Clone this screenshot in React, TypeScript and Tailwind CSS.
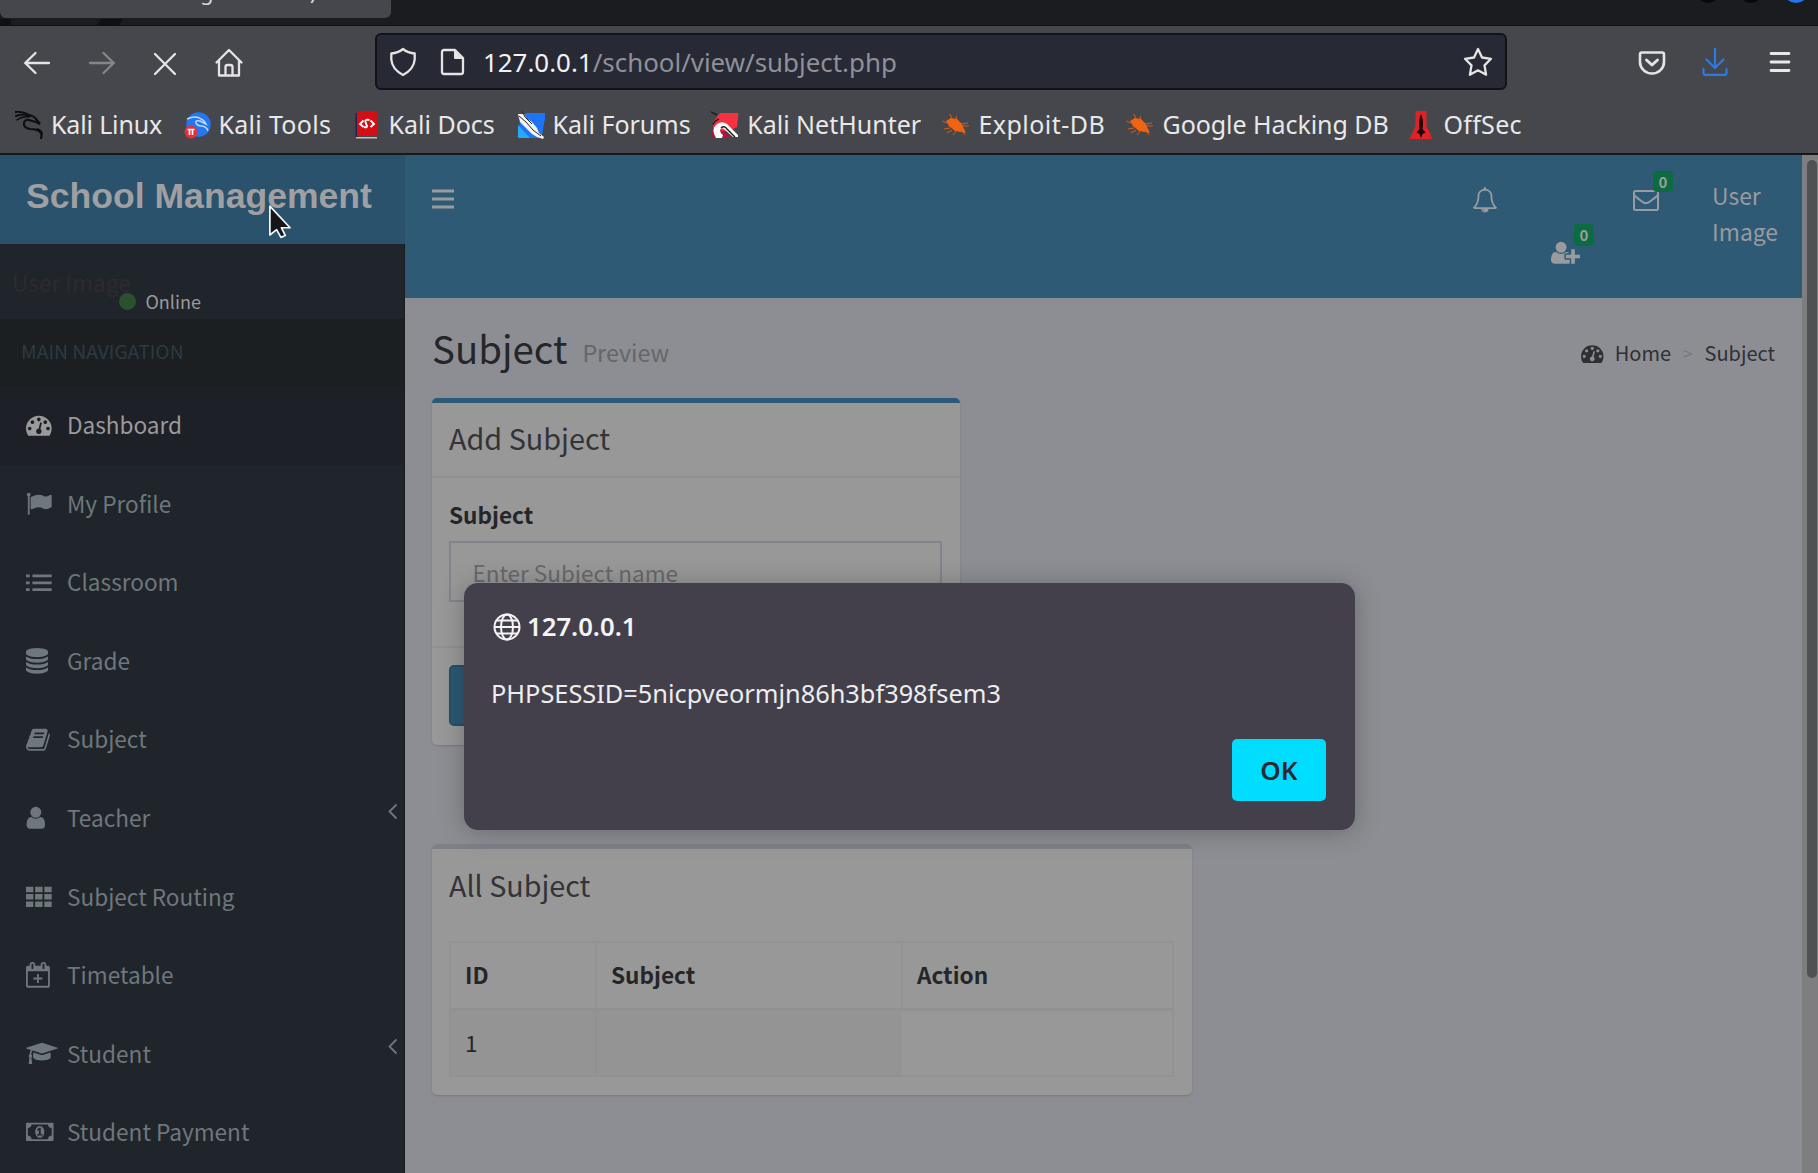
import React from 'react';

const UI = "font-['Noto_Sans',sans-serif]";
const PAGE = "font-['Noto_Sans_CJK_SC','Noto_Sans',sans-serif]";

const paths = {
  dashboard:
    'M384 1152q0-53-37.5-90.5t-90.5-37.5-90.5 37.5-37.5 90.5 37.5 90.5 90.5 37.5 90.5-37.5 37.5-90.5zm192-448q0-53-37.5-90.5t-90.5-37.5-90.5 37.5-37.5 90.5 37.5 90.5 90.5 37.5 90.5-37.5 37.5-90.5zm428 481l101-382q6-26-7.5-48.5t-38.5-29.5-48 6.5-30 39.5l-101 382q-60 5-107 43.5t-63 98.5q-20 77 20 146t117 89 146-20 89-117q16-60-6-117t-72-91zm660-33q0-53-37.5-90.5t-90.5-37.5-90.5 37.5-37.5 90.5 37.5 90.5 90.5 37.5 90.5-37.5 37.5-90.5zm-640-640q0-53-37.5-90.5t-90.5-37.5-90.5 37.5-37.5 90.5 37.5 90.5 90.5 37.5 90.5-37.5 37.5-90.5zm448 192q0-53-37.5-90.5t-90.5-37.5-90.5 37.5-37.5 90.5 37.5 90.5 90.5 37.5 90.5-37.5 37.5-90.5zm320 448q0 261-141 483-19 29-54 29h-1402q-35 0-54-29-141-221-141-483 0-182 71-348t191-286 286-191 348-71 348 71 286 191 191 286 71 348z',
  flag: 'M320 256q0 72-64 110v1266q0 13-9.5 22.5t-22.5 9.5h-64q-13 0-22.5-9.5t-9.5-22.5v-1266q-64-38-64-110 0-53 37.5-90.5t90.5-37.5 90.5 37.5 37.5 90.5zm1472 64v763q0 25-12.5 38.5t-39.5 27.5q-215 116-369 116-61 0-123.5-22t-108.5-48-115.5-48-142.5-22q-192 0-464 146-17 9-33 9-26 0-45-19t-19-45v-742q0-32 31-55 21-14 79-43 236-120 421-120 107 0 200 29t219 88q38 19 88 19 54 0 117.5-21t110-47 88-47 54.5-21q26 0 45 19t19 45z',
  list: 'M0 320h256v192h-256zM0 800h256v192h-256zM0 1280h256v192h-256zM448 320h1344v192h-1344zM448 800h1344v192h-1344zM448 1280h1344v192h-1344z',
  database:
    'M896 768q237 0 443-43t325-127v170q0 69-103 128t-280 93.5-385 34.5-385-34.5-280-93.5-103-128v-170q119 84 325 127t443 43zm0 768q237 0 443-43t325-127v170q0 69-103 128t-280 93.5-385 34.5-385-34.5-280-93.5-103-128v-170q119 84 325 127t443 43zm0-384q237 0 443-43t325-127v170q0 69-103 128t-280 93.5-385 34.5-385-34.5-280-93.5-103-128v-170q119 84 325 127t443 43zm0-1152q208 0 385 34.5t280 93.5 103 128v128q0 69-103 128t-280 93.5-385 34.5-385-34.5-280-93.5-103-128v-128q0-69 103-128t280-93.5 385-34.5z',
  book: 'M1703 478q40 57 18 129l-275 906q-19 64-76.5 107.5t-122.5 43.5h-923q-77 0-148.5-53.5t-99.5-131.5q-24-67-2-127 0-4 3-27t4-37q1-8-3-21.5t-3-19.5q2-11 8-21t16.5-23.5 16.5-23.5q23-38 45-91.5t30-91.5q3-10 .5-30t-.5-28q3-11 17-28t17-23q21-36 42-92t25-90q1-9-2.5-32t.5-28q4-13 22-30.5t22-22.5q19-26 42.5-84.5t27.5-96.5q1-8-3-25.5t-2-26.5q2-8 9-18t18-23 17-21q8-12 16.5-30.5t15-35 16-36 19.5-32 26.5-23.5 36-11.5 47.5 5.5l-1 3q38-9 51-9h761q74 0 114 56t18 130l-274 906q-36 119-71.5 153.5t-128.5 34.5h-869q-27 0-38 15-11 16-1 43 24 70 144 70h923q29 0 56-15.5t35-41.5l300-987q7-22 5-57 38 15 59 43zm-1064 2q-4 13 2 22.5t20 9.5h608q13 0 25.5-9.5t16.5-22.5l21-64q4-13-2-22.5t-20-9.5h-608q-13 0-25.5 9.5t-16.5 22.5zm-83 256q-4 13 2 22.5t20 9.5h608q13 0 25.5-9.5t16.5-22.5l21-64q4-13-2-22.5t-20-9.5h-608q-13 0-25.5 9.5t-16.5 22.5z',
  user: 'M1536 1399q0 109-62.5 187t-150.5 78h-854q-88 0-150.5-78t-62.5-187q0-85 8.5-160.5t31.5-152 58.5-131 94-89 134.5-34.5q131 128 313 128t313-128q76 0 134.5 34.5t94 89 58.5 131 31.5 152 8.5 160.5zm-256-887q0 159-112.5 271.5t-271.5 112.5-271.5-112.5-112.5-271.5 112.5-271.5 271.5-112.5 271.5 112.5 112.5 271.5z',
  grid: 'M0 192h512v384h-512zM640 192h512v384h-512zM1280 192h512v384h-512zM0 704h512v384h-512zM640 704h512v384h-512zM1280 704h512v384h-512zM0 1216h512v384h-512zM640 1216h512v384h-512zM1280 1216h512v384h-512z',
  calendar:
    'M1536 256q52 0 90 38t38 90v1280q0 52-38 90t-90 38h-1408q-52 0-90-38t-38-90v-1280q0-52 38-90t90-38h128v-96q0-66 47-113t113-47h64q66 0 113 47t47 113v96h384v-96q0-66 47-113t113-47h64q66 0 113 47t47 113v96h128zm-384-96v288q0 14 9 23t23 9h64q14 0 23-9t9-23v-288q0-14-9-23t-23-9h-64q-14 0-23 9t-9 23zm-768 0v288q0 14 9 23t23 9h64q14 0 23-9t9-23v-288q0-14-9-23t-23-9h-64q-14 0-23 9t-9 23zm1152 1504v-1024h-1408v1024h1408zm-640-576h224q14 0 23 9t9 23v64q0 14-9 23t-23 9h-224v224q0 14-9 23t-23 9h-64q-14 0-23-9t-9-23v-224h-224q-14 0-23-9t-9-23v-64q0-14 9-23t23-9h224v-224q0-14 9-23t23-9h64q14 0 23 9t9 23v224z',
  cap: 'M1774 836l18 316q4 69-82 128t-235 93.5-323 34.5-323-34.5-235-93.5-82-128l18-316 574 181q22 7 48 7t48-7zm530-324q0 23-22 31l-1120 352q-4 1-10 1t-10-1l-652-206q-43 34-71 111.5t-34 178.5q63 36 63 109 0 69-58 107l58 433q2 14-8 25-9 11-24 11h-192q-15 0-24-11-10-11-8-25l58-433q-58-38-58-107 0-73 65-111 11-207 98-330l-333-104q-22-8-22-31t22-31l1120-352q4-1 10-1t10 1l1120 352q22 8 22 31z',
  money:
    'M768 1152h384v-96h-128v-448h-114l-148 137 77 80q42-37 55-57h2v288h-128v96zm512-256q0 70-21 142t-59.5 134-101.5 101-138 39-138-39-101.5-101-59.5-134-21-142 21-142 59.5-134 101.5-101 138-39 138 39 101.5 101 59.5 134 21 142zm512 256v-512q-106 0-181-75t-75-181h-1152q0 106-75 181t-181 75v512q106 0 181 75t75 181h1152q0-106 75-181t181-75zm128-832v1152q0 26-19 45t-45 19h-1792q-26 0-45-19t-19-45v-1152q0-26 19-45t45-19h1792q26 0 45 19t19 45z',
  bell: 'M912 1696q0-16-16-16-59 0-101.5-42.5t-42.5-101.5q0-16-16-16t-16 16q0 73 51.5 124.5t124.5 51.5q16 0 16-16zm-666-288h1300q-266-300-266-832 0-51-24-105t-69-103-121.5-80.5-169.5-31.5-169.5 31.5-121.5 80.5-69 103-24 105q0 532-266 832zm1482 0q0 52-38 90t-90 38h-448q0 106-75 181t-181 75-181-75-75-181h-448q-52 0-90-38t-38-90q50-42 91-88t85-119.5 74.5-158.5 50-206 19.5-260q0-152 117-282.5t307-158.5q-8-19-8-39 0-40 28-68t68-28 68 28 28 68q0 20-8 39 190 28 307 158.5t117 282.5q0 139 19.5 260t50 206 74.5 158.5 85 119.5 91 88z',
  userPlus:
    'M704 896q-159 0-271.5-112.5t-112.5-271.5 112.5-271.5 271.5-112.5 271.5 112.5 112.5 271.5-112.5 271.5-271.5 112.5zm960 128h352q13 0 22.5 9.5t9.5 22.5v192q0 13-9.5 22.5t-22.5 9.5h-352v352q0 13-9.5 22.5t-22.5 9.5h-192q-13 0-22.5-9.5t-9.5-22.5v-352h-352q-13 0-22.5-9.5t-9.5-22.5v-192q0-13 9.5-22.5t22.5-9.5h352v-352q0-13 9.5-22.5t22.5-9.5h192q13 0 22.5 9.5t9.5 22.5v352zm-736 224q0 52 38 90t90 38h256v238q-68 50-171 50h-874q-121 0-194-69t-73-190q0-53 3.5-103.5t14-109 26.5-108.5 43-97.5 62-81 85.5-53.5 111.5-20q19 0 39 17 79 61 154.5 91.5t164.5 30.5 164.5-30.5 154.5-91.5q20-17 39-17 132 0 217 96h-223q-52 0-90 38t-38 90v192z',
};

function Glyph({ d, x = 0, w = 1792, size = 25.7 }: { d: string; x?: number; w?: number; size?: number }) {
  return (
    <svg viewBox={`${x} 0 ${w} 1792`} width={(w * size) / 1792} height={size} fill="currentColor" className="shrink-0">
      <path d={d} />
    </svg>
  );
}

const nav: { label: string; d: string; x?: number; w?: number; size?: number; active?: boolean; more?: boolean }[] = [
  { label: 'Dashboard', d: paths.dashboard, active: true },
  { label: 'My Profile', d: paths.flag },
  { label: 'Classroom', d: paths.list },
  { label: 'Grade', d: paths.database, x: 128, w: 1536 },
  { label: 'Subject', d: paths.book, x: 60, w: 1672 },
  { label: 'Teacher', d: paths.user, x: 212, w: 1408, more: true },
  { label: 'Subject Routing', d: paths.grid },
  { label: 'Timetable', d: paths.calendar, w: 1664 },
  { label: 'Student', d: paths.cap, w: 2304, size: 24.8, more: true },
  { label: 'Student Payment', d: paths.money, w: 1920 },
];

const KaliDragon = () => (
  <svg viewBox="0 0 28 28" width="28" height="28" fill="none" stroke="#0d0e10" strokeLinecap="round">
    <path d="M0 1q9-1 15 4" strokeWidth="1.800" />
    <path d="M1 5q7-3 13 0" strokeWidth="2" />
    <path d="M2 9q5-4 12-3" strokeWidth="1.500" />
    <path d="M14 4q5 1 7 4l4 5-4-2q-4-1-7-2q-5-1-5 4q0 4 6 5q8 0 11 4q1 2 0 5" strokeWidth="2.200" />
    <path d="M22 18q5 1 5 5" strokeWidth="1.400" />
  </svg>
);
const KaliTools = () => (
  <svg viewBox="0 0 28 28" width="28" height="28">
    <circle cx="15.500" cy="13.500" r="12.200" fill="#2378f2" />
    <path d="M4 8q9-4 14 0q3 1 5 5l-6-3q-5-1-4 2q1 3 6 3q5 1 6 5" fill="none" stroke="#bcd8fb" strokeWidth="1.500" />
    <circle cx="8" cy="21" r="6.500" fill="#e8303a" />
    <path d="M4.500 18.500h7M6.500 18.500v5.500M9.500 18.500v5.500" stroke="#fff" strokeWidth="1.600" />
  </svg>
);
const KaliDocs = () => (
  <svg viewBox="0 0 28 28" width="28" height="28">
    <path d="M2.500 2h2v24h-2z" fill="#28204a" />
    <path d="M4 0h20v25H4z" fill="#d40f14" />
    <path d="M3 26h21v1.500H3z" fill="#c9bcbc" />
    <path d="M10.500 9.500L7 13l3.500 3M17.500 9.500L21 13l-3.500 3M16.500 9q-5-1-4 2t1.500 4q0 2-3 1" fill="none" stroke="#fff" strokeWidth="1.900" />
  </svg>
);
const KaliForums = () => (
  <svg viewBox="0 0 28 28" width="28" height="28">
    <path d="M9 2h20l-4 22q-1 3-4 3H3q-3 0-2-3L3 10z" fill="#1f74f5" />
    <path d="M1 14l12 13H3q-3 0-2-3z" fill="#28a8fa" />
    <path d="M1 3l6 0 3 5 5 3 5 6 2 5 5 4-1 2-6-2-5-3-6-6-6-6z" fill="#f3f3f1" />
    <path d="M2 5l7 6 7 8 8 6M5 0l3 6 7 7" fill="none" stroke="#28292d" strokeWidth="1" />
  </svg>
);
const NetHunter = () => (
  <svg viewBox="0 0 28 28" width="28" height="28">
    <path d="M9 2h18.500L26 16l-8 4H4q-3-4-2-9z" fill="#f5323f" />
    <path d="M1 18l7 0 14 9H4q-3 0-3-3z" fill="#b41239" />
    <path d="M5 27q-5-8 0-13q5-5 11-1l11 11v2h-5l-9-8q-3-2-4 1q0 3 3 5l-1 3z" fill="#fff" />
    <path d="M0 1l6 3M2 14q1-4 6-6M10 17q3-3 6 1l8 8" fill="none" stroke="#1b1c20" strokeWidth="1.400" />
  </svg>
);
const Exploit = () => (
  <svg viewBox="0 0 28 28" width="28" height="28">
    <path d="M4 10l5-3 6 1 5 5 2 5 2 4-5-1-6-1-6-5z" fill="#ee6410" />
    <path d="M10 8L8 3M15 9l-1-4M19 13l7-1M20 15l7 0M5 12l-5-2M8 17l-6 1M10 19l-5 3M14 20l-3 4M19 19l4 5" stroke="#c9611f" strokeWidth="1" />
  </svg>
);
const OffSec = () => (
  <svg viewBox="0 0 28 28" width="28" height="28">
    <path d="M8.500 0h11v15L25.500 28H2.500l6-13z" fill="#e02226" />
    <path d="M14 3q3 6 1.500 15l3 3.500-3 1.500-1.500 4-1.500-4-3-1.500 3-3.500Q11 9 14 3z" fill="#1d0508" />
  </svg>
);

const bookmarks = [
  { label: 'Kali Linux', Icon: KaliDragon, box: 'w-[167.5px] tracking-[-0.15px]' },
  { label: 'Kali Tools', Icon: KaliTools, box: 'w-[170px] tracking-[0.3px]' },
  { label: 'Kali Docs', Icon: KaliDocs, box: 'w-[164px]' },
  { label: 'Kali Forums', Icon: KaliForums, box: 'w-[194.7px]' },
  { label: 'Kali NetHunter', Icon: NetHunter, box: 'w-[231.3px]' },
  { label: 'Exploit-DB', Icon: Exploit, box: 'w-[184px] tracking-[0.45px]' },
  { label: 'Google Hacking DB', Icon: Exploit, box: 'w-[281px] tracking-[-0.05px]' },
  { label: 'OffSec', Icon: OffSec, box: 'w-[120px] tracking-[0.3px]' },
];

function Browser() {
  return (
    <div className={`${UI} relative h-[155px] w-full bg-[#45474c] text-[#e8e8e8]`}>
      <div className="flex h-[26px] justify-between overflow-hidden border-b border-[#0e0f12] bg-[#1b1c20]">
        <div>
          <div className="h-[18px] w-[391px] overflow-hidden rounded-b-[6px] bg-[#45474d]">
            <div className="mt-[-24px] flex text-[22px] leading-[30px] text-[#d8d8d8]">
              <span className="ml-[200px]">g</span>
              <span className="ml-[98px] pt-[3px] italic">/</span>
            </div>
          </div>
          <div className="flex h-[7px] items-end">
            <div className="h-[6px] w-[11px] bg-[#0f1013]" />
            <div className="ml-[88px] h-[6px] w-[22px] -skew-x-[30deg] bg-[#0f1013]" />
          </div>
        </div>
        <div className="flex gap-[21px] pr-[9px]">
          <div className="mt-[-19px] h-[22px] w-[22px] rounded-full bg-[#08080a]" />
          <div className="mt-[-19px] h-[22px] w-[22px] rounded-full bg-[#08080a]" />
          <div className="mt-[-23px] h-[26px] w-[26px] rounded-full bg-[#2374f0]" />
        </div>
      </div>

      <div className="flex h-[73px] items-start pl-[23px] pt-[7px]">
        <div className="flex h-[56px] w-[352px] items-center">
          <svg width="28" height="28" viewBox="0 0 28 28" fill="none" stroke="#e4e4e4" strokeWidth="2.300" strokeLinecap="round" className="mt-[4px]">
            <path d="M26 14H2.500M12.500 4L2.300 14l10.200 10" />
          </svg>
          <svg width="28" height="28" viewBox="0 0 28 28" fill="none" stroke="#85868a" strokeWidth="2.300" strokeLinecap="round" className="ml-[37px] mt-[4px]">
            <path d="M2 14h23.500M15.500 4l10.200 10-10.200 10" />
          </svg>
          <svg width="28" height="28" viewBox="0 0 28 28" fill="none" stroke="#e4e4e4" strokeWidth="2.300" strokeLinecap="round" className="ml-[35px] mt-[5px]">
            <path d="M4 4l20 20M24 4L4 24" />
          </svg>
          <svg width="30" height="30" viewBox="0 0 30 30" fill="none" stroke="#e4e4e4" strokeWidth="2.300" strokeLinejoin="round" strokeLinecap="round" className="ml-[35px] mt-[4px]">
            <path d="M2.500 14.500L15 2l12.500 12.500M5 12.500V27.500h20V12.500M11.500 27v-8q0-2 2-2h3q2 0 2 2v8" />
          </svg>
        </div>
        <div className="flex h-[57px] w-[1132px] items-center rounded-[6px] border-2 border-[#121317] bg-[#272935] pl-[11px] pr-[12px]">
          <svg width="30" height="30" viewBox="0 0 30 30" fill="none" stroke="#e4e4e4" strokeWidth="2.300" strokeLinejoin="round">
            <path d="M15 2q5 4 11.700 4.500v6Q26 22 15 28Q4 22 3.300 12.500v-6Q10 6 15 2z" />
          </svg>
          <svg width="26" height="28" viewBox="0 0 26 28" className="ml-[21px]">
            <path d="M5 2h11l8 8v14q0 2-2 2H5q-2 0-2-2V4q0-2 2-2z" fill="none" stroke="#e4e4e4" strokeWidth="2.300" strokeLinejoin="round" />
            <path d="M15 2v8q0 1 1 1h8z" fill="#e4e4e4" />
          </svg>
          <span className="ml-[18px] mt-[1px] text-[25.9px] leading-[36px] text-[#8f9098]">
            <span className="text-[#f2f2f2]">127.0.0.1</span>/school/view/subject.php
          </span>
          <svg width="30" height="30" viewBox="0 0 30 30" fill="none" stroke="#e4e4e4" strokeWidth="2.300" strokeLinejoin="round" className="ml-auto">
            <path d="M15 2l4 8.500 9 1.300-6.500 6.600 1.600 9.300L15 23.300l-8.100 4.400 1.600-9.300L2 11.800l9-1.300z" />
          </svg>
        </div>
        <div className="ml-auto flex h-[56px] items-center pr-[26.500px]">
          <svg width="28" height="26" viewBox="0 0 28 26" fill="none" stroke="#e4e4e4" strokeWidth="2.600" strokeLinecap="round" strokeLinejoin="round" className="mt-[3px]">
            <path d="M4 2.500h20q2 0 2 2V12a12 11.500 0 0 1-24 0V4.500q0-2 2-2z" />
            <path d="M8.500 10l5.500 5 5.500-5" strokeWidth="3" />
          </svg>
          <svg width="26" height="28" viewBox="0 0 26 28" fill="none" stroke="#2b7be4" strokeWidth="2.200" strokeLinecap="round" strokeLinejoin="round" className="ml-[36px] mt-[2px]">
            <path d="M13 1v18M4.500 11.500L13 20l8.500-8.500M1.500 21v4q0 1.800 2 1.800h19q2 0 2-1.800v-4" />
          </svg>
          <svg width="24" height="22" viewBox="0 0 24 22" stroke="#e8e8e8" strokeWidth="2.800" strokeLinecap="round" className="ml-[40px] mt-[2px]">
            <path d="M3 2.500h18M3 11h18M3 19.500h18" />
          </svg>
        </div>
      </div>

      <div className="flex h-[54px] items-start pl-[15px] pt-[9px]">
        {bookmarks.map(({ label, Icon, box }) => (
          <div key={label} className={`${box} flex shrink-0 items-center whitespace-nowrap text-[25px] leading-[36px]`}>
            <Icon />
            <span className="-mt-[2px] ml-[8px]">{label}</span>
          </div>
        ))}
      </div>
      <div className="h-[2px] bg-[#16181c]" />
    </div>
  );
}

function Sidebar() {
  return (
    <aside className="h-full w-[405px] shrink-0 overflow-hidden">
      <div className="flex h-[89px] items-start bg-[#2a526c] pl-[26px] pt-[21px] font-['Liberation_Sans',sans-serif] text-[35.6px] font-bold leading-[40px] text-[#a09fa1]">
        School Management
      </div>
      <div className="h-[929px] border-r border-[#181b1f] bg-[#20252b]">
        <div className="h-[75px] pt-[23px]">
          <div className="h-[22px] pl-[12px] text-[22.7px] leading-[32px] text-[#2d2b2e]">User Image</div>
          <div className="flex items-center pl-[119px] text-[18px] leading-[24px] text-[#9a9a9b]">
            <span className="mt-[1px] h-[17px] w-[17px] rounded-full bg-[#2c502e]" />
            <span className="ml-[9.5px]">Online</span>
          </div>
        </div>
        <div className="flex h-[67px] items-center bg-[#1c1f22] pb-[4px] pl-[21px] text-[19.3px] leading-[28px] text-[#2d3a41]">
          MAIN NAVIGATION
        </div>
        {nav.map((n) => (
          <div
            key={n.label}
            className={`flex h-[78.56px] items-center pl-[26px] pr-[6px] text-[22.6px] leading-[32px] ${n.active ? 'bg-[#1d2027] text-[#9a9a9b]' : 'text-[#6e777c]'}`}
          >
            <div className="flex w-[41px] shrink-0">
              <Glyph d={n.d} x={n.x} w={n.w} size={n.size} />
            </div>
            <span>{n.label}</span>
            {n.more && (
              <svg width="11" height="17" viewBox="0 0 11 17" fill="none" stroke="currentColor" strokeWidth="1.800" className="mb-[14px] ml-auto">
                <path d="M9.500 1.500L2.500 8.500l7 7" />
              </svg>
            )}
          </div>
        ))}
      </div>
    </aside>
  );
}

function TopNav() {
  return (
    <header className="flex h-[143px] items-start bg-[#2e5a76] pl-[27px] text-[#999b9e]">
      <svg width="22" height="20" viewBox="0 0 22 20" fill="currentColor" className="mt-[34px]">
        <path d="M0 .5h22v3H0zM0 8.500h22v3H0zM0 16.500h22v3H0z" />
      </svg>
      <div className="ml-auto flex items-start">
        <div className="mt-[32px] w-[78px]">
          <Glyph d={paths.bell} x={64} w={1664} />
        </div>
        <div className="relative mt-[85px] w-[82px]">
          <Glyph d={paths.userPlus} w={2048} />
          <span className="absolute -top-[16px] left-[23px] flex h-[22px] w-[20px] items-center justify-center rounded-[4px] bg-[#0d6b42] pb-px text-[15px] font-bold leading-none text-[#9a9d9b]">
            0
          </span>
        </div>
        <div className="relative mt-[35px] w-[79px]">
          <span className="absolute -top-[19px] left-[20px] flex h-[21px] w-[20px] items-center justify-center rounded-[4px] bg-[#0d6b42] text-[15px] font-bold leading-none text-[#9a9d9b]">
            0
          </span>
          <svg width="26" height="21" viewBox="0 0 26 21" fill="none" stroke="currentColor" strokeWidth="2">
            <rect x="1" y="1" width="24" height="19" rx="1.500" />
            <path d="M1 5q3 3 8 6.500q4 3.500 8 0Q22 8 25 5" />
          </svg>
        </div>
        <div className="mt-[23px] w-[90px] text-[22.9px] leading-[35.6px]">
          User
          <br />
          Image
        </div>
      </div>
    </header>
  );
}

function Content() {
  return (
    <section className="pl-[27px] text-[#252628]">
      <div className="flex h-[100px] items-start">
        <h1 className="pt-[21px] text-[38.4px] leading-[56px]">Subject</h1>
        <span className="ml-[15px] mt-[37px] text-[23.3px] leading-[34px] text-[#65666b]">Preview</span>
        <div className="ml-auto mt-[40px] flex h-[30px] items-center pr-[27px] text-[20px] leading-[30px] text-[#2f3033]">
          <Glyph d={paths.dashboard} size={22.5} />
          <span className="ml-[11px]">Home</span>
          <span className="ml-[12px] text-[17px] text-[#77787c]">&gt;</span>
          <span className="ml-[12px]">Subject</span>
        </div>
      </div>

      <div className="h-[347px] w-[528px] rounded-[5px] border-t-[5px] border-[#2a5a77] bg-[#989899] shadow-[0_1px_2px_rgba(0,0,0,0.15)]">
        <div className="h-[75px] border-b-2 border-[#909193] pl-[17px] pt-[14px] text-[28.8px] leading-[42px] text-[#333437]">Add Subject</div>
        <div className="h-[170px] border-b-2 border-[#909193] px-[17px] pt-[20px]">
          <div className="text-[22.6px] font-bold leading-[34px]">Subject</div>
          <div className="mt-[9px] h-[61px] w-[493px] border-2 border-[#82838b] pl-[21.5px] pt-[13px] text-[22.5px] leading-[32px] text-[#68686c]">
            Enter Subject name
          </div>
        </div>
        <div className="pl-[17px] pt-[17px]">
          <div className="h-[61px] w-[110px] rounded-[5px] border-2 border-[#254f69] bg-[#2c5975]" />
        </div>
      </div>

      <div className="mt-[99px] h-[251px] w-[760px] rounded-[5px] border-t-[5px] border-[#7f8188] bg-[#989899] px-[17px] shadow-[0_1px_2px_rgba(0,0,0,0.15)]">
        <div className="h-[92px] pt-[15px] text-[28.7px] leading-[42px] text-[#333437]">All Subject</div>
        <table className="w-[725px] table-fixed border-collapse border-2 border-[#929294] text-left text-[22.6px] leading-[32px]">
          <colgroup>
            <col className="w-[146px]" />
            <col className="w-[306px]" />
            <col />
          </colgroup>
          <thead>
            <tr className="h-[67px] border-b-[3px] border-[#909193]">
              <th className="border-r-2 border-[#929294] pl-[14px]">ID</th>
              <th className="border-r-2 border-[#929294] pl-[14px]">Subject</th>
              <th className="pl-[14px]">Action</th>
            </tr>
          </thead>
          <tbody>
            <tr className="h-[67px]">
              <td className="border-r-2 border-[#919193] bg-[#949495] pl-[14px]">1</td>
              <td className="bg-[#949495]" />
              <td />
            </tr>
          </tbody>
        </table>
      </div>
    </section>
  );
}

function Dialog() {
  return (
    <div className={`${UI} absolute left-[464px] top-[583px] h-[247px] w-[891px] rounded-[14px] bg-[#43404c] px-[29px] text-[#f4f4f5] shadow-[0_2px_26px_rgba(0,0,0,0.25)]`}>
      <div className="flex items-center pt-[26px] text-[25.7px] font-semibold leading-[36px]">
        <svg width="28" height="28" viewBox="0 0 28 28" fill="none" stroke="#f4f4f5" strokeWidth="2">
          <circle cx="14" cy="14" r="12.500" />
          <ellipse cx="14" cy="14" rx="6" ry="12.500" />
          <path d="M1.500 14h25M4 7.500h20M4 20.500h20" />
        </svg>
        <span className="ml-[6px]">127.0.0.1</span>
      </div>
      <div className="-ml-[2px] mt-[30px] text-[25.35px] leading-[36px] text-[#ededee]">PHPSESSID=5nicpveormjn86h3bf398fsem3</div>
      <div className="mt-[28px] flex justify-end">
        <button className="h-[62px] w-[94px] rounded-[5px] bg-[#00ddff] text-[26px] font-semibold leading-[36px] text-[#2b2a33]">OK</button>
      </div>
    </div>
  );
}

export default function App() {
  return (
    <div className={`${PAGE} relative flex h-[1173px] w-[1818px] flex-col overflow-hidden bg-[#8d8e93]`}>
      <Browser />
      <div className="flex h-[1018px]">
        <Sidebar />
        <main className="min-w-0 flex-1">
          <TopNav />
          <Content />
        </main>
        <div className="flex w-[16px] justify-end bg-[#7e7e80] pr-[1px] pt-[5px]">
          <div className="h-[818px] w-[10px] rounded-full bg-[#505154]" />
        </div>
      </div>
      <Dialog />
      <svg width="25" height="37" viewBox="0 0 26 38" className="absolute left-[267px] top-[203px]">
        <path d="M3 3v30l7-5.500 4.500 8 4.500-2-4-8h9z" fill="#15161a" stroke="#f4f4f4" strokeWidth="1.800" strokeLinejoin="round" />
      </svg>
    </div>
  );
}
